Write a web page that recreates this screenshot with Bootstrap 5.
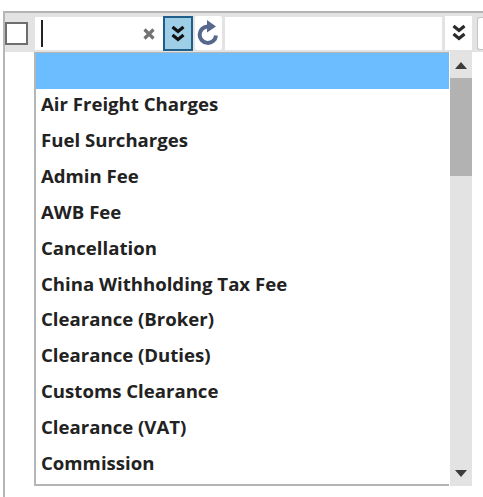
<!DOCTYPE html>
<html lang="en">
<head>
  <meta charset="UTF-8">
  <meta name="viewport" content="width=device-width, initial-scale=1">
  <title>Charge picker</title>
  <link href="https://cdn.jsdelivr.net/npm/bootstrap@5.3.0/dist/css/bootstrap.min.css" rel="stylesheet">
  <style>
    html, body { height: 497px; overflow: hidden; background: #fff; }
    body { font-family: "Open Sans", "Noto Sans", sans-serif; }
    .frame { width: 483px; height: 497px; padding-top: 11px; padding-left: 3px; }
    .panel { height: 486px; border-top: 2px solid #b4b4b4; border-left: 2px solid #b4b6b8; }
    .toolbar { height: 39px; background: #e3e3e3; }
    .check { width: 23px; height: 23px; margin: 9px 0 0 0; background: #fff; border: 2px solid #6e6e6e; }
    .field { height: 33px; margin-top: 4px; background: #fff; }
    .field-one { width: 128px; margin-left: 7px; padding-left: 6px; }
    .caret-bar { width: 2px; height: 27px; background: #222; margin-top: 3px; }
    .clear-x { margin-right: 7px; }
    .tool-btn { height: 35px; margin-top: 3px; padding: 0; border: 0; border-radius: 0; background: #fff; }
    .btn-open { width: 30px; background: #9fcfe6; border: 2px solid #1f5f8a; }
    .btn-reload { width: 27px; margin-left: 2px; height: 34px; border-radius: 2px; }
    .field-two { width: 218px; margin-left: 3px; }
    .btn-open-two { width: 27px; margin-left: 3px; height: 34px; }
    .btn-stub { width: 6px; margin-left: 5px; height: 33px; margin-top: 4px; background: #fff; border: 1px solid #c4c4c4; border-right: 0; border-radius: 3px 0 0 3px; }
    .dropdown-wrap { position: relative; }
    .drop { position: absolute; left: 29px; top: 0; width: 438px; height: 434px; }
    .drop-list { width: 415px; height: 434px; border-left: 2px solid #b4b6b8; border-bottom: 2px solid #b4b4b4; border-top: 1px solid #b4b4b4; overflow: hidden; background: #fff; }
    .drop-row { height: 36px; line-height: 29px; padding: 0 0 0 5px; border: 0; border-radius: 0; color: #222; font-size: 18.6px; font-weight: 700; background: #fff; white-space: nowrap; }
    .drop-row.is-blank { background: #6bbdff; }
    .scroll { width: 22px; margin-left: 1px; background: #e3e3e3; height: 434px; }
    .scroll-btn { height: 26px; }
    .scroll-thumb { height: 98px; background: #b2b2b2; }
  </style>
</head>
<body>
  <div class="frame">
    <div class="panel">
      <div class="toolbar d-flex align-items-start">
        <div class="check"></div>
        <div class="field field-one d-flex align-items-center justify-content-between">
          <span class="caret-bar align-self-start"></span>
          <svg class="clear-x" width="14" height="14" viewBox="0 0 14 14"><path d="M2.5 2.5 11.5 11.5M11.5 2.5 2.5 11.5" stroke="#737373" stroke-width="3.2"/></svg>
        </div>
        <button class="btn tool-btn btn-open d-flex align-items-center justify-content-center" type="button" aria-label="Open">
          <svg width="16" height="18" viewBox="0 0 16 18"><path d="M2.5 2 8 6.5 13.5 2M2.5 10 8 14.5 13.5 10" fill="none" stroke="#111" stroke-width="3.2"/></svg>
        </button>
        <button class="btn tool-btn btn-reload d-flex align-items-center justify-content-center" type="button" aria-label="Reload">
          <svg width="24" height="26" viewBox="0 0 24 26"><path d="M12 6.5A8.2 8.2 0 1 0 20 15.5" fill="none" stroke="#56688c" stroke-width="4"/><path d="M11 0 20 6.5 11 12.5Z" fill="#56688c"/></svg>
        </button>
        <div class="field field-two"></div>
        <button class="btn tool-btn btn-open-two d-flex align-items-center justify-content-center" type="button" aria-label="Open">
          <svg width="16" height="18" viewBox="0 0 16 18"><path d="M2.5 2 8 6.5 13.5 2M2.5 10 8 14.5 13.5 10" fill="none" stroke="#2a2a2a" stroke-width="3.2"/></svg>
        </button>
        <div class="btn-stub"></div>
      </div>
      <div class="dropdown-wrap">
        <div class="drop d-flex">
          <div class="drop-list list-group list-group-flush flex-shrink-0">
            <div class="list-group-item drop-row is-blank"></div>
            <div class="list-group-item drop-row">Air Freight Charges</div>
            <div class="list-group-item drop-row">Fuel Surcharges</div>
            <div class="list-group-item drop-row">Admin Fee</div>
            <div class="list-group-item drop-row">AWB Fee</div>
            <div class="list-group-item drop-row">Cancellation</div>
            <div class="list-group-item drop-row">China Withholding Tax Fee</div>
            <div class="list-group-item drop-row">Clearance (Broker)</div>
            <div class="list-group-item drop-row">Clearance (Duties)</div>
            <div class="list-group-item drop-row">Customs Clearance</div>
            <div class="list-group-item drop-row">Clearance (VAT)</div>
            <div class="list-group-item drop-row">Commission</div>
          </div>
          <div class="scroll d-flex flex-column">
            <div class="scroll-btn d-flex align-items-center justify-content-center">
              <svg width="12" height="7" viewBox="0 0 12 7"><path d="M6 0 12 7H0Z" fill="#3c3c3c"/></svg>
            </div>
            <div class="scroll-thumb"></div>
            <div class="flex-grow-1"></div>
            <div class="scroll-btn d-flex align-items-center justify-content-center">
              <svg width="12" height="7" viewBox="0 0 12 7"><path d="M0 0H12L6 7Z" fill="#3c3c3c"/></svg>
            </div>
          </div>
        </div>
      </div>
    </div>
  </div>
  <script src="https://cdn.jsdelivr.net/npm/bootstrap@5.3.0/dist/js/bootstrap.bundle.min.js"></script>
</body>
</html>
